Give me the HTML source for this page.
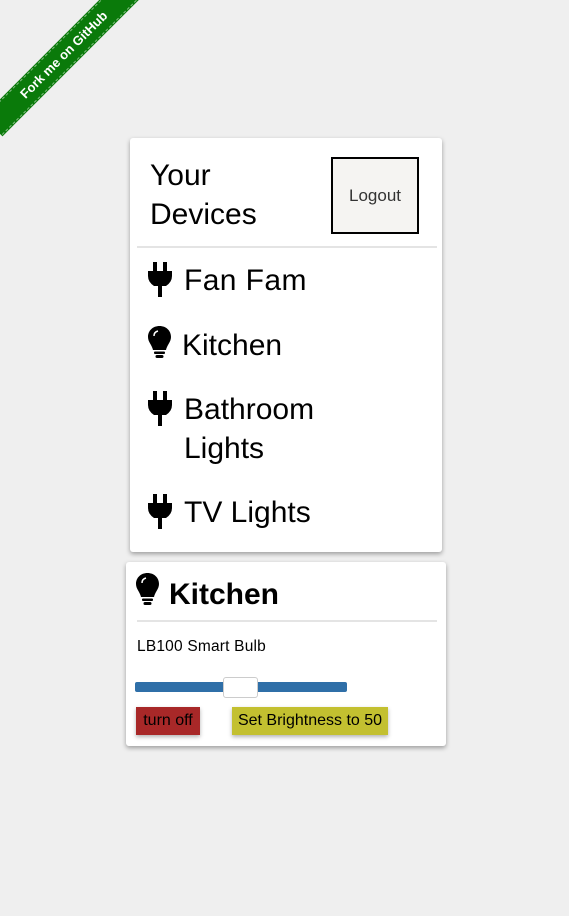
<!DOCTYPE html>
<html><head><meta charset="utf-8"><style>
body{margin:0;width:569px;height:916px;background:#efefef;font-family:"Liberation Sans",sans-serif;position:relative;overflow:hidden}
.a{position:absolute}
.card{position:absolute;background:#fff;border-radius:3px;box-shadow:0 2px 5px rgba(0,0,0,.35)}
.t{position:absolute;font-size:30px;line-height:39px;color:#000;white-space:nowrap}
.ribbon{position:absolute;left:-36px;top:42px;width:200px;height:26px;background:#0a7a0a;transform:rotate(-45deg);color:#fff;font-size:13px;font-weight:bold;text-align:center;line-height:24px;box-shadow:0 0 0 1px #0a7a0a;border-top:1px dashed rgba(255,255,255,.5);border-bottom:1px dashed rgba(255,255,255,.5);box-sizing:border-box}
</style></head><body>
<div class="ribbon">Fork me on GitHub</div>

<div class="card" style="left:130px;top:138px;width:312px;height:414px"></div>
<div class="t" style="left:150px;top:156px">Your</div>
<div class="t" style="left:150px;top:195px">Devices</div>
<div class="a" style="left:331px;top:157px;width:84px;height:73px;border:2px solid #000;background:#f5f4f2;font-size:17px;color:#333;text-align:center;line-height:73px">Logout</div>
<div class="a" style="left:137px;top:246px;width:300px;height:2px;background:#e4e4e4"></div>

<svg class="a" style="left:148px;top:262px" width="24" height="35" viewBox="0 0 24 35"><path d="M5 0h4v9H5zM15 0h4v9h-4zM0 9h24v5q0 6-6 10h-4v11h-4V24H6Q0 20 0 14z"/></svg>
<div class="t" style="left:184px;top:261px;letter-spacing:0.4px">Fan Fam</div>
<svg class="a" style="left:148px;top:326px" width="23" height="32" viewBox="0 0 23 32"><path d="M11.5 0C5 0 0 4.5 0 11c0 5 4 8 5 13h13c1-5 5-8 5-13C23 4.5 18 0 11.5 0z"/><rect x="6" y="25.5" width="11" height="2.5" rx="1"/><rect x="7.5" y="29" width="8" height="3" rx="1.5"/><path d="M6 10q0-4 4-5" stroke="#fff" stroke-width="1.5" fill="none"/></svg>
<div class="t" style="left:182px;top:326px">Kitchen</div>
<svg class="a" style="left:148px;top:391px" width="24" height="35" viewBox="0 0 24 35"><path d="M5 0h4v9H5zM15 0h4v9h-4zM0 9h24v5q0 6-6 10h-4v11h-4V24H6Q0 20 0 14z"/></svg>
<div class="t" style="left:184px;top:390px">Bathroom</div>
<div class="t" style="left:184px;top:429px">Lights</div>
<svg class="a" style="left:148px;top:494px" width="24" height="35" viewBox="0 0 24 35"><path d="M5 0h4v9H5zM15 0h4v9h-4zM0 9h24v5q0 6-6 10h-4v11h-4V24H6Q0 20 0 14z"/></svg>
<div class="t" style="left:184px;top:493px">TV Lights</div>

<div class="card" style="left:126px;top:562px;width:320px;height:184px"></div>
<svg class="a" style="left:136px;top:573px" width="23" height="32" viewBox="0 0 23 32"><path d="M11.5 0C5 0 0 4.5 0 11c0 5 4 8 5 13h13c1-5 5-8 5-13C23 4.5 18 0 11.5 0z"/><rect x="6" y="25.5" width="11" height="2.5" rx="1"/><rect x="7.5" y="29" width="8" height="3" rx="1.5"/><path d="M6 10q0-4 4-5" stroke="#fff" stroke-width="1.5" fill="none"/></svg>
<div class="t" style="left:169px;top:575px;font-weight:bold">Kitchen</div>
<div class="a" style="left:137px;top:620px;width:300px;height:2px;background:#e4e4e4"></div>
<div class="a" style="left:137px;top:638px;font-size:15.5px;line-height:18px;letter-spacing:0.2px">LB100 Smart Bulb</div>
<div class="a" style="left:135px;top:682px;width:212px;height:10px;background:#2f6fa8;border-radius:2px"></div>
<div class="a" style="left:223px;top:677px;width:33px;height:19px;background:#fff;border:1px solid #ccc;border-radius:3px"></div>
<div class="a" style="left:136px;top:707px;width:64px;height:28px;background:#a82828;font-size:16px;line-height:28px;text-align:center;box-shadow:0 2px 4px rgba(0,0,0,.3)">turn off</div>
<div class="a" style="left:232px;top:707px;width:156px;height:28px;background:#c3c030;font-size:16px;line-height:28px;text-align:center;box-shadow:0 2px 4px rgba(0,0,0,.3);white-space:nowrap">Set Brightness to 50</div>
</body></html>
